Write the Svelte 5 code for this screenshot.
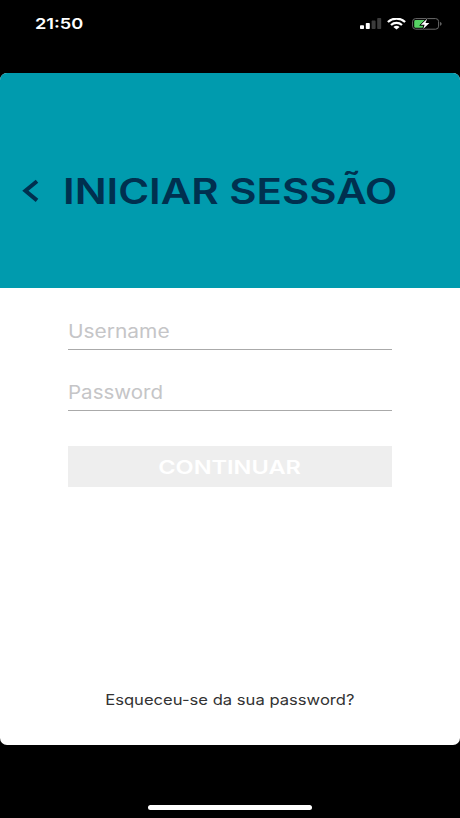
<script>
  let username = '';
  let password = '';
</script>

<div class="phone">
  <div class="status">
    <span class="time wide">21:50</span>
    <div class="icons">
      <svg width="22" height="12" viewBox="0 0 22 12">
        <rect x="0" y="7.2" width="4" height="3.8" rx="0.8" fill="#fff" />
        <rect x="5.8" y="5" width="4" height="6" rx="0.8" fill="#fff" />
        <rect x="11.6" y="2.6" width="4" height="8.4" rx="0.8" fill="#3b3b3b" />
        <rect x="17.2" y="0" width="4" height="11" rx="0.8" fill="#3b3b3b" />
      </svg>
      <svg class="wifi" width="19" height="12" viewBox="0 0 19 12">
        <path d="M.9 4C5.6-.4 13.4-.4 18.1 4" fill="none" stroke="#fff" stroke-width="2.3" />
        <path d="M4 7C7.1 4.1 11.9 4.1 15 7" fill="none" stroke="#fff" stroke-width="2.2" />
        <path d="M6.4 9C8.2 7.4 10.8 7.4 12.6 9L9.5 11.6Z" fill="#fff" />
      </svg>
      <svg width="31" height="12" viewBox="0 0 31 12">
        <rect x="0.6" y="0.6" width="26" height="10.6" rx="3" fill="none" stroke="#6a6a6a" />
        <path d="M28.2 4.1C30 4.5 30 7.4 28.2 7.8Z" fill="#777" />
        <path d="M3.6 2H13L7.4 7.4H11.4L10.6 9.8H3.6Q2.2 9.8 2.2 8.4V3.4Q2.2 2 3.6 2Z" fill="#56d364" />
        <path d="M15.2.8 8.8 6.8H12.6L11.2 11 17.4 5.1H13.5Z" fill="#fff" stroke="#000" stroke-width="1.2" paint-order="stroke" />
      </svg>
    </div>
  </div>

  <div class="card">
    <header>
      <svg class="back" width="18" height="24" viewBox="0 0 18 24">
        <path d="M15 2.2 3.4 11.8 15 21.4" fill="none" stroke="#00304f" stroke-width="4" />
      </svg>
      <h1 class="wide">INICIAR SESSÃO</h1>
    </header>

    <form on:submit|preventDefault>
      <div class="field"><input class="wide" type="text" placeholder="Username" bind:value={username} /></div>
      <div class="field"><input class="wide password" type="password" placeholder="Password" bind:value={password} /></div>
      <button disabled={!username || !password}><span class="wide">CONTINUAR</span></button>
    </form>

    <div class="forgot"><span class="wide">Esqueceu-se da sua password?</span></div>
  </div>

  <div class="home"></div>
</div>

<style>
  :global(body) {
    background: #000;
  }

  .phone {
    display: flex;
    flex-direction: column;
    align-items: center;
    height: 818px;
    background: #000;
    font-family: Inter, "Liberation Sans", sans-serif;
    overflow: hidden;
  }

  .wide {
    display: inline-block;
    white-space: nowrap;
    transform: scaleX(1.2);
    transform-origin: left center;
  }

  .status {
    box-sizing: border-box;
    display: flex;
    justify-content: space-between;
    width: 100%;
    height: 73px;
    padding: 14px 17px 0 34.5px;
  }

  .time {
    height: 20px;
    color: #fff;
    font-size: 15.2px;
    font-weight: 600;
    line-height: 20px;
  }

  .icons {
    display: flex;
    height: 12px;
    margin-top: 4px;
  }

  .wifi {
    margin: 0 6px 0 5px;
  }

  .card {
    display: flex;
    flex-direction: column;
    width: 100%;
    height: 671.5px;
    background: #fff;
    border-radius: 7px;
    overflow: hidden;
  }

  header {
    box-sizing: border-box;
    display: flex;
    align-items: center;
    height: 214.5px;
    padding: 21px 0 0 22px;
    background: #009bae;
  }

  h1 {
    margin: 0 0 0 22.5px;
    color: #00304f;
    font-size: 35px;
    font-weight: 600;
    line-height: 44px;
  }

  form {
    display: flex;
    flex-direction: column;
    padding: 26px 68px 0;
  }

  .field {
    height: 35px;
    margin-bottom: 25.5px;
    border-bottom: 1px solid #aaa;
  }

  input {
    width: 260px;
    height: 34px;
    padding: 0;
    border: 0;
    outline: 0;
    background: none;
    font: 400 18.5px Inter, "Liberation Sans", sans-serif;
  }

  input.wide {
    transform: scaleX(1.13);
  }

  input.password {
    transform: scaleX(1.11);
  }

  input::placeholder {
    color: #c5c5c7;
    opacity: 1;
  }

  button {
    height: 40.5px;
    margin-top: 9.5px;
    padding: 2px 0 0;
    border: 0;
    background: #eee;
    color: #fff;
    font: 600 19px Inter, "Liberation Sans", sans-serif;
  }

  button .wide {
    transform: scaleX(1.24);
    transform-origin: center;
  }

  .forgot {
    margin: auto 0 35px;
    color: #333;
    font-size: 14.5px;
    line-height: 20px;
    text-align: center;
  }

  .forgot .wide {
    transform: scaleX(1.145);
    transform-origin: center;
  }

  .home {
    width: 164px;
    height: 5px;
    margin-top: 60px;
    background: #fff;
    border-radius: 3px;
  }
</style>
